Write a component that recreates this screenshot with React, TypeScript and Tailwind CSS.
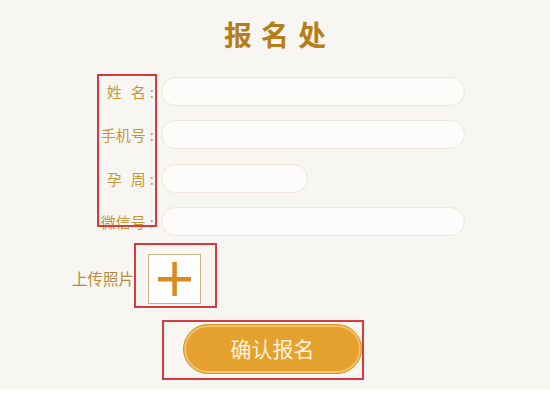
import React from "react";

const fields = [
  { label: "姓名", spaced: true, width: "w-[304px]" },
  { label: "手机号", spaced: false, width: "w-[304px]" },
  { label: "孕周", spaced: true, width: "w-[147px]" },
  { label: "微信号", spaced: false, width: "w-[304px]" },
];

export default function App() {
  return (
    <div className="w-full h-[413px] bg-white font-['Noto_Sans_CJK_SC','Noto_Sans',sans-serif]">
      <section className="relative h-[390px] bg-[#f8f6f2]">
        {/* Title */}
        <div className="h-[77px] pt-[17px] text-center">
          <h1 className="text-[28px] leading-[34px] font-bold tracking-[9px] pl-[9px] text-[#b67d1c]">
            报名处
          </h1>
        </div>

        {/* Fields */}
        <div className="flex flex-col gap-[14.3px] pl-[97px]">
          {fields.map((f) => (
            <div key={f.label} className="flex items-center h-[29px]">
              <label className="w-[60px] pr-[3px] text-right text-[15px] leading-none text-[#c8963a] whitespace-nowrap">
                {f.spaced ? (
                  <>
                    <span className="mr-[9px]">{f.label[0]}</span>
                    {f.label[1]}
                  </>
                ) : (
                  f.label
                )}
                <span className="ml-[4px]">:</span>
              </label>
              <input
                className={`${f.width} ml-[4px] h-[29px] rounded-full border border-[#eee5d6] bg-[#fdfcfa] px-4 text-[14px] outline-none`}
              />
            </div>
          ))}
        </div>

        {/* Upload */}
        <div className="flex items-center mt-[18px] pl-[72px]">
          <span className="w-[76px] text-[15.5px] leading-none text-[#b98a3c] whitespace-nowrap">
            上传照片
          </span>
          <button className="w-[53px] h-[50px] border border-[#ccb287] bg-white flex items-center justify-center">
            <svg width="33" height="34" viewBox="0 0 33 34">
              <rect x="0" y="15" width="33" height="4.5" fill="#db8b1b" />
              <rect x="14.3" y="0" width="4.5" height="34" fill="#db8b1b" />
            </svg>
          </button>
        </div>

        {/* Submit */}
        <div className="mt-[20px] pl-[183px]">
          <button className="w-[179px] h-[50px] rounded-full bg-[#e5a12d] border border-[#d99426] shadow-[inset_0_0_0_2px_#f0c373] text-[21px] leading-none text-[#fdf2de]">
            确认报名
          </button>
        </div>

        {/* Annotation frames */}
        <div className="absolute left-[97px] top-[74px] w-[60px] h-[153px] border-2 border-[#d63a3c] pointer-events-none" />
        <div className="absolute left-[134px] top-[243px] w-[83px] h-[65px] border-2 border-[#d63a3c] pointer-events-none" />
        <div className="absolute left-[162px] top-[320px] w-[202px] h-[60px] border-2 border-[#d63a3c] pointer-events-none" />
      </section>
    </div>
  );
}
